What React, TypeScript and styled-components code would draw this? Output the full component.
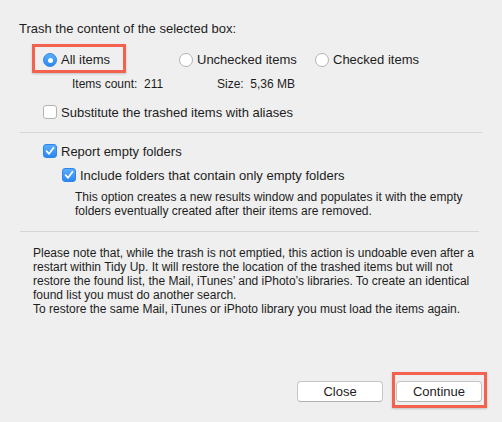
import React from 'react';
import styled, { createGlobalStyle } from 'styled-components';

const GlobalStyle = createGlobalStyle`
  html, body {
    margin: 0;
    padding: 0;
    background: #efefef;
  }
  *, *::before, *::after {
    box-sizing: border-box;
  }
`;

const StyledWindow = styled.div`
  width: 502px;
  height: 422px;
  display: flex;
  flex-direction: column;
  padding-top: 21px;
  background: #efefef;
  color: #1d1d1d;
  font-family: 'Liberation Sans', Arial, sans-serif;
  font-size: 13px;
  overflow: hidden;
`;

const StyledTitle = styled.div`
  height: 16px;
  line-height: 16px;
  margin-left: 19px;
`;

const StyledRadioRow = styled.div`
  display: grid;
  grid-template-columns: repeat(3, 136px);
  height: 22px;
  margin-top: 12px;
  margin-left: 43px;
`;

type HighlightProps = { highlighted?: boolean };
const StyledRadioOption = styled.label<HighlightProps>`
  position: relative;
  display: flex;
  align-items: center;
  gap: 4px;
  line-height: 16px;
  &::before {
    content: '';
    display: ${({ highlighted }) => (highlighted ? 'block' : 'none')};
    position: absolute;
    left: -11px;
    top: -5px;
    width: 94px;
    height: 29px;
    border: 3px solid #f2624f;
    box-shadow: 0 1px 2px rgba(0, 0, 0, 0.2);
  }
`;

type CheckedProps = { checked?: boolean };
const StyledRadio = styled.span<CheckedProps>`
  width: 14px;
  height: 14px;
  border-radius: 50%;
  flex-shrink: 0;
  display: flex;
  align-items: center;
  justify-content: center;
  background: ${({ checked }) =>
    checked ? 'linear-gradient(#5aaefb, #2c87f2)' : '#ffffff'};
  border: 1px solid ${({ checked }) => (checked ? '#2f86e8' : '#b3b3b3')};
  &::after {
    content: '';
    display: ${({ checked }) => (checked ? 'block' : 'none')};
    width: 5px;
    height: 5px;
    border-radius: 50%;
    background: #ffffff;
  }
`;

const StyledInfoRow = styled.div`
  display: grid;
  grid-template-columns: 145px auto;
  height: 14px;
  line-height: 14px;
  margin-top: 6px;
  margin-left: 72px;
  font-size: 12px;
`;

type IndentProps = { indent: number; gap?: number };
const StyledCheckRow = styled.label<IndentProps>`
  display: flex;
  align-items: center;
  gap: 4px;
  height: 18px;
  margin-top: ${({ gap }) => gap ?? 6}px;
  margin-left: ${({ indent }) => indent}px;
`;

const StyledCheckbox = styled.span<CheckedProps>`
  width: 14px;
  height: 14px;
  border-radius: 3px;
  flex-shrink: 0;
  display: flex;
  align-items: center;
  justify-content: center;
  background: ${({ checked }) =>
    checked ? 'linear-gradient(#5aaefb, #2c87f2)' : '#ffffff'};
  border: 1px solid ${({ checked }) => (checked ? '#2f86e8' : '#b3b3b3')};
`;

type SeparatorProps = { right: number; gap: number };
const StyledSeparator = styled.div<SeparatorProps>`
  height: 1px;
  margin-top: ${({ gap }) => gap}px;
  margin-left: 20px;
  margin-right: ${({ right }) => right}px;
  background: #d6d6d6;
`;

type NoteProps = { indent: number; gap: number };
const StyledNote = styled.p<NoteProps>`
  margin: ${({ gap }) => gap}px 0 0 ${({ indent }) => indent}px;
  font-size: 12px;
  line-height: 14px;
  white-space: nowrap;
`;

const StyledButtonBar = styled.div`
  display: flex;
  justify-content: flex-end;
  gap: 13px;
  margin-top: auto;
  padding: 0 20px 20px 0;
`;

type ButtonProps = { highlighted?: boolean };
const StyledButton = styled.button<ButtonProps>`
  position: relative;
  width: 86px;
  height: 21px;
  padding: 0;
  border: 1px solid #c6c6c6;
  border-bottom-color: #b2b2b2;
  border-radius: 4px;
  background: #ffffff;
  color: #1d1d1d;
  font-family: 'Liberation Sans', Arial, sans-serif;
  font-size: 13px;
  &::before {
    content: '';
    display: ${({ highlighted }) => (highlighted ? 'block' : 'none')};
    position: absolute;
    left: -5px;
    top: -10px;
    width: 95px;
    height: 36px;
    border: 3px solid #f2624f;
    box-shadow: 0 1px 2px rgba(0, 0, 0, 0.2);
  }
`;

const Check: React.FC = () => (
  <svg width="10" height="10" viewBox="0 0 10 10">
    <path
      d="M1.6 5.2 L4 7.8 L8.6 1.8"
      fill="none"
      stroke="#ffffff"
      strokeWidth="1.7"
      strokeLinecap="round"
      strokeLinejoin="round"
    />
  </svg>
);

const RADIOS = [
  { label: 'All items', checked: true },
  { label: 'Unchecked items', checked: false },
  { label: 'Checked items', checked: false },
];

const App: React.FC = () => (
  <>
    <GlobalStyle />
    <StyledWindow>
      <StyledTitle>Trash the content of the selected box:</StyledTitle>
      <StyledRadioRow>
        {RADIOS.map((radio) => (
          <StyledRadioOption key={radio.label} highlighted={radio.checked}>
            <StyledRadio checked={radio.checked} />
            {radio.label}
          </StyledRadioOption>
        ))}
      </StyledRadioRow>
      <StyledInfoRow>
        <span>Items count: &nbsp;211</span>
        <span>Size: &nbsp;5,36 MB</span>
      </StyledInfoRow>
      <StyledCheckRow indent={43} gap={12}>
        <StyledCheckbox />
        Substitute the trashed items with aliases
      </StyledCheckRow>
      <StyledSeparator right={20} gap={11} />
      <StyledCheckRow indent={43} gap={9}>
        <StyledCheckbox checked>
          <Check />
        </StyledCheckbox>
        Report empty folders
      </StyledCheckRow>
      <StyledCheckRow indent={62}>
        <StyledCheckbox checked>
          <Check />
        </StyledCheckbox>
        Include folders that contain only empty folders
      </StyledCheckRow>
      <StyledNote indent={75} gap={6}>
        This option creates a new results window and populates it with the empty
        <br />
        folders eventually created after their items are removed.
      </StyledNote>
      <StyledSeparator right={23} gap={13} />
      <StyledNote indent={33} gap={14}>
        Please note that, while the trash is not emptied, this action is undoable even after a
        <br />
        restart within Tidy Up. It will restore the location of the trashed items but will not
        <br />
        restore the found list, the Mail, iTunes’ and iPhoto’s libraries. To create an identical
        <br />
        found list you must do another search.
        <br />
        To restore the same Mail, iTunes or iPhoto library you must load the items again.
      </StyledNote>
      <StyledButtonBar>
        <StyledButton>Close</StyledButton>
        <StyledButton highlighted>Continue</StyledButton>
      </StyledButtonBar>
    </StyledWindow>
  </>
);

export default App;
